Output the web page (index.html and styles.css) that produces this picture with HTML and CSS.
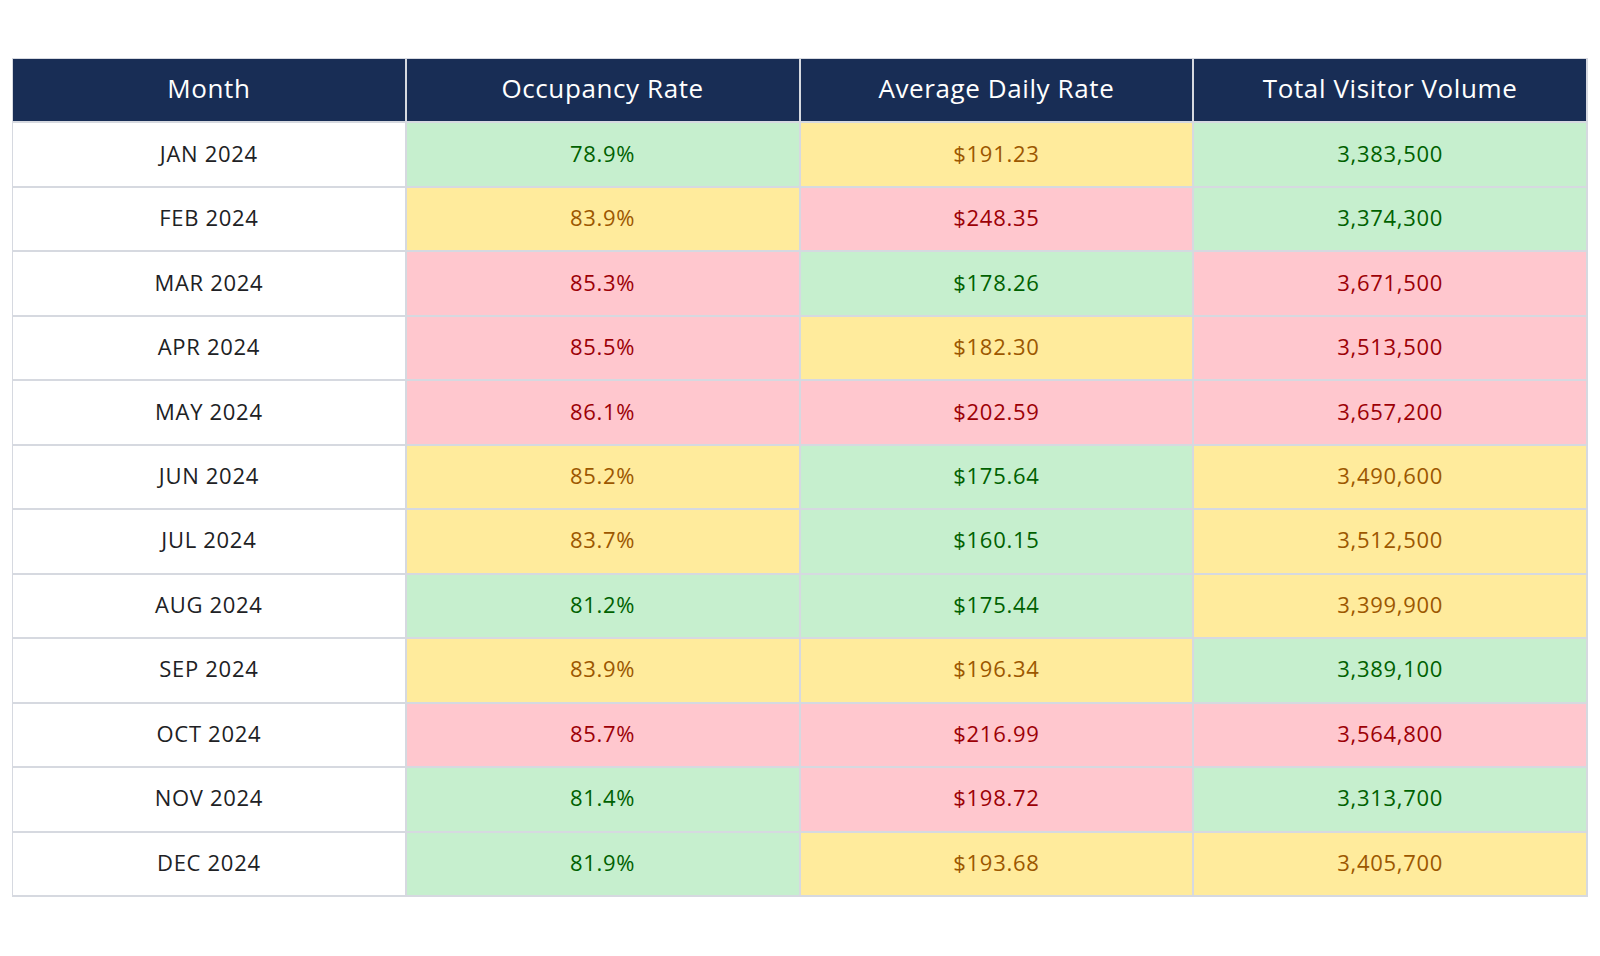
FILE: index.html
```html
<!DOCTYPE html>
<html lang="en">
<head>
<meta charset="utf-8">
<title>Monthly Metrics</title>
<link rel="stylesheet" href="styles.css">
</head>
<body>
<div class="page">
  <div class="table">
    <div class="cell head">Month</div>
    <div class="cell head">Occupancy Rate</div>
    <div class="cell head">Average Daily Rate</div>
    <div class="cell head">Total Visitor Volume</div>

    <div class="cell month">JAN 2024</div><div class="cell good">78.9%</div><div class="cell mid">$191.23</div><div class="cell good">3,383,500</div>
    <div class="cell month">FEB 2024</div><div class="cell mid">83.9%</div><div class="cell bad">$248.35</div><div class="cell good">3,374,300</div>
    <div class="cell month">MAR 2024</div><div class="cell bad">85.3%</div><div class="cell good">$178.26</div><div class="cell bad">3,671,500</div>
    <div class="cell month">APR 2024</div><div class="cell bad">85.5%</div><div class="cell mid">$182.30</div><div class="cell bad">3,513,500</div>
    <div class="cell month">MAY 2024</div><div class="cell bad">86.1%</div><div class="cell bad">$202.59</div><div class="cell bad">3,657,200</div>
    <div class="cell month">JUN 2024</div><div class="cell mid">85.2%</div><div class="cell good">$175.64</div><div class="cell mid">3,490,600</div>
    <div class="cell month">JUL 2024</div><div class="cell mid">83.7%</div><div class="cell good">$160.15</div><div class="cell mid">3,512,500</div>
    <div class="cell month">AUG 2024</div><div class="cell good">81.2%</div><div class="cell good">$175.44</div><div class="cell mid">3,399,900</div>
    <div class="cell month">SEP 2024</div><div class="cell mid">83.9%</div><div class="cell mid">$196.34</div><div class="cell good">3,389,100</div>
    <div class="cell month">OCT 2024</div><div class="cell bad">85.7%</div><div class="cell bad">$216.99</div><div class="cell bad">3,564,800</div>
    <div class="cell month">NOV 2024</div><div class="cell good">81.4%</div><div class="cell bad">$198.72</div><div class="cell good">3,313,700</div>
    <div class="cell month">DEC 2024</div><div class="cell good">81.9%</div><div class="cell mid">$193.68</div><div class="cell mid">3,405,700</div>
  </div>
</div>
</body>
</html>
```

FILE: styles.css
```css
html, body {
  margin: 0;
  padding: 0;
  background: #ffffff;
}

.page {
  padding: 58px 12px 0 12px;
}

.table {
  display: grid;
  grid-template-columns: repeat(4, 1fr);
  grid-template-rows: repeat(13, 1fr);
  gap: 2px;
  padding: 1px 2px 2px 1px;
  width: 1576px;
  height: 839px;
  box-sizing: border-box;
  background: #d6d9e0;
  font-family: "Open Sans", "Noto Sans", sans-serif;
}

.cell {
  display: flex;
  align-items: center;
  justify-content: center;
  padding-bottom: 4px;
  font-size: 22px;
  letter-spacing: 0.7px;
  color: #202124;
  background: #ffffff;
}

.head {
  background: #182d55;
  color: #ffffff;
  font-size: 26px;
  letter-spacing: 0.6px;
}

.good {
  background: #c6efce;
  color: #006100;
}

.mid {
  background: #ffeb9c;
  color: #9c5700;
}

.bad {
  background: #ffc7ce;
  color: #9c0006;
}
```
